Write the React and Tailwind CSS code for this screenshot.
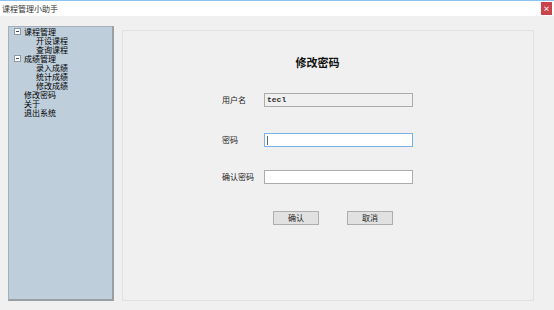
import React from 'react';

const font = { fontFamily: '"Noto Sans CJK SC", "Noto Sans", sans-serif' };

const tree = [
  { label: '课程管理', level: 0, box: true },
  { label: '开设课程', level: 1 },
  { label: '查询课程', level: 1 },
  { label: '成绩管理', level: 0, box: true },
  { label: '录入成绩', level: 1 },
  { label: '统计成绩', level: 1 },
  { label: '修改成绩', level: 1 },
  { label: '修改密码', level: 0 },
  { label: '关于', level: 0 },
  { label: '退出系统', level: 0 },
];

const TreeRow = ({ label, level, box }) => (
  <div className={`flex items-center h-[9px] ${level ? 'pl-[27px]' : 'pl-[5px]'}`}>
    {!level &&
      (box ? (
        <span className="w-[7px] h-[7px] mr-[3px] border border-[#8e9aa5] bg-white flex items-center justify-center">
          <span className="w-[3px] h-px bg-[#3b4a5a]" />
        </span>
      ) : (
        <span className="w-[7px] mr-[3px]" />
      ))}
    <span className="text-[8px] leading-[9px] text-black whitespace-nowrap">{label}</span>
  </div>
);

const Field = ({ label, value, active, disabled, className }) => (
  <div className={`flex items-center h-[14px] ${className}`}>
    <span className="w-[42px] text-[8px] leading-none text-[#222]">{label}</span>
    <div
      className={`w-[149px] h-[14px] flex items-center px-[2px] border ${
        disabled ? 'bg-[#f0f0f0] border-[#acacac]' : active ? 'bg-white border-[#7ab3ea]' : 'bg-white border-[#acacac]'
      }`}
    >
      {value && <span className="text-[8px] leading-none font-bold text-[#333] font-['Liberation_Mono',monospace]">{value}</span>}
      {active && <span className="w-px h-[9px] bg-[#666]" />}
    </div>
  </div>
);

export default function App() {
  return (
    <div className="w-[554px] h-[310px] bg-[#f0f0f0] flex flex-col overflow-hidden" style={font}>
      <div className="h-[16px] bg-white border-t border-[#8cc4ef] flex items-center justify-between pl-[2px] pr-[2px] shrink-0">
        <span className="text-[8px] leading-none text-[#333]">课程管理小助手</span>
        <div className="w-[11px] h-[13px] bg-[#c9434a] flex items-center justify-center">
          <span className="text-white text-[7px] leading-none font-bold">×</span>
        </div>
      </div>
      <div className="flex pl-[8px] pt-[10px] gap-[8px]">
        <div className="w-[106px] h-[275px] bg-[#bfcedb] border border-[#a7b0b8] border-r-2 border-b-2 border-r-[#9a9fa4] border-b-[#9a9fa4]">
          {tree.map((t) => (
            <TreeRow key={t.label} {...t} />
          ))}
        </div>
        <div className="mt-[4px] w-[412px] h-[271px] border border-[#e2e2e2] flex flex-col pl-[99px]">
          <div className="w-[191px] text-center pt-[26px] text-[11px] leading-none font-bold text-[#111]">修改密码</div>
          <Field className="mt-[25px]" label="用户名" value="tecl" disabled />
          <Field className="mt-[26px]" label="密码" active />
          <Field className="mt-[23px]" label="确认密码" />
          <div className="mt-[27px] flex pl-[51px] gap-[28px]">
            <button className="w-[46px] h-[14px] bg-[#e1e1e1] border border-[#adadad] text-[8px] leading-none text-[#222]">确认</button>
            <button className="w-[46px] h-[14px] bg-[#e1e1e1] border border-[#adadad] text-[8px] leading-none text-[#222]">取消</button>
          </div>
        </div>
      </div>
    </div>
  );
}
